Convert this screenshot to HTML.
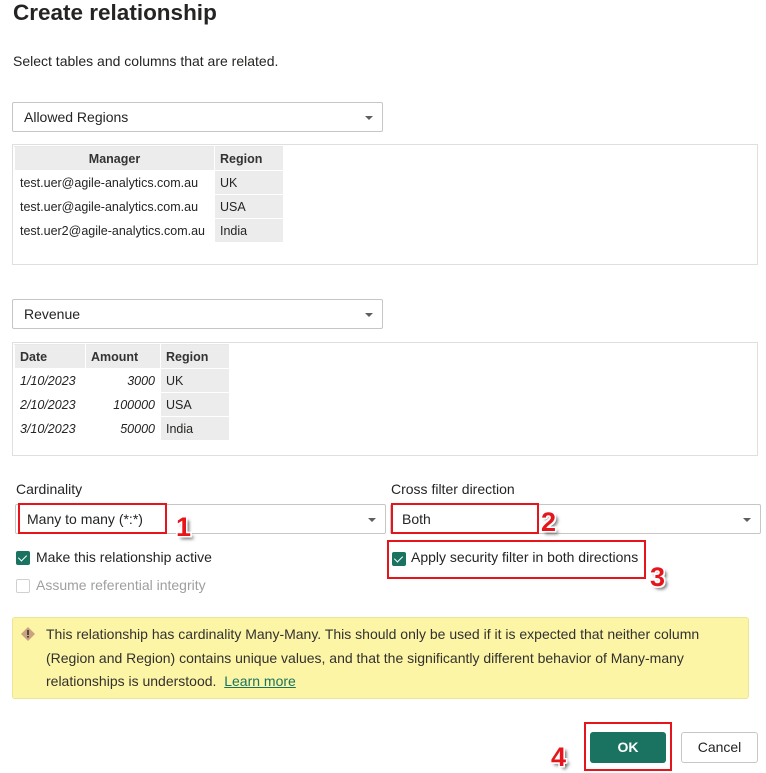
<!DOCTYPE html>
<html><head><meta charset="utf-8"><style>
*{box-sizing:border-box;margin:0;padding:0}
body{width:766px;height:773px;background:#fff;position:relative;overflow:hidden;font-family:"Liberation Sans",sans-serif;color:#252423;font-size:14px}
.a{position:absolute;white-space:nowrap}
.dd{position:absolute;border:1px solid #c8c6c4;border-radius:2px;background:#fff}
.dd span{position:absolute;left:11px;top:6px;font-size:14px;color:#252423}
.dd i{position:absolute;right:9px;top:13px;border-left:4px solid transparent;border-right:4px solid transparent;border-top:4px solid #605e5c}
.box{position:absolute;border:1px solid #e1dfdd}
table{border-collapse:collapse;font-size:12.5px;position:absolute;left:1px;top:1px}
td,th{height:24px;padding:0 5px;border:1px solid #fff;border-top:1px solid #e8e8e8}
th{background:#ececec;font-weight:bold;color:#333}
.g{background:#ececec}
.red{position:absolute;border:2px solid #e6141b}
.num{position:absolute;font-weight:bold;font-size:27px;color:#e6141b;text-shadow:-1.5px -1.5px 0 #fff,1.5px -1.5px 0 #fff,-1.5px 1.5px 0 #fff,1.5px 1.5px 0 #fff,0 1.5px 0 #fff,1.5px 0 0 #fff,3px 3px 3px #666}
.cb{position:absolute;width:14px;height:14px;border-radius:2px;background:#1a7360}
.cb:after{content:"";position:absolute;left:4px;top:2px;width:4px;height:7px;border:solid #fff;border-width:0 1.5px 1.5px 0;transform:rotate(45deg)}
</style></head><body>
<div class="a" style="left:13px;top:0px;font-size:22.5px;font-weight:bold;color:#252423">Create relationship</div>
<div class="a" style="left:13px;top:53px;font-size:14px">Select tables and columns that are related.</div>

<div class="dd" style="left:12px;top:102px;width:371px;height:30px"><span>Allowed Regions</span><i></i></div>
<div class="box" style="left:12px;top:144px;width:746px;height:121px">
<table><tr><th style="width:200px">Manager</th><th style="width:69px;text-align:left">Region</th></tr>
<tr><td>test.uer@agile-analytics.com.au</td><td class="g">UK</td></tr>
<tr><td>test.uer@agile-analytics.com.au</td><td class="g">USA</td></tr>
<tr><td>test.uer2@agile-analytics.com.au</td><td class="g">India</td></tr></table></div>

<div class="dd" style="left:12px;top:299px;width:371px;height:30px"><span>Revenue</span><i></i></div>
<div class="box" style="left:12px;top:342px;width:746px;height:114px">
<table><tr><th style="width:71px;text-align:left">Date</th><th style="width:75px;text-align:left">Amount</th><th style="width:69px;text-align:left">Region</th></tr>
<tr><td><i>1/10/2023</i></td><td style="text-align:right"><i>3000</i></td><td class="g">UK</td></tr>
<tr><td><i>2/10/2023</i></td><td style="text-align:right"><i>100000</i></td><td class="g">USA</td></tr>
<tr><td><i>3/10/2023</i></td><td style="text-align:right"><i>50000</i></td><td class="g">India</td></tr></table></div>

<div class="a" style="left:16px;top:481px">Cardinality</div>
<div class="dd" style="left:15px;top:504px;width:371px;height:30px"><span>Many to many (*:*)</span><i></i></div>
<div class="a" style="left:391px;top:481px">Cross filter direction</div>
<div class="dd" style="left:390px;top:504px;width:371px;height:30px"><span>Both</span><i></i></div>

<div class="red" style="left:18px;top:503px;width:149px;height:31px"></div>
<div class="num" style="left:176px;top:512px">1</div>
<div class="red" style="left:391px;top:503px;width:148px;height:31px"></div>
<div class="num" style="left:541px;top:507px">2</div>

<div class="cb" style="left:16px;top:551px"></div>
<div class="a" style="left:36px;top:549px">Make this relationship active</div>
<div class="a" style="left:16px;top:579px;width:14px;height:14px;border:1px solid #d2d0ce;border-radius:2px"></div>
<div class="a" style="left:36px;top:577px;color:#a19f9d">Assume referential integrity</div>

<div class="red" style="left:387px;top:540px;width:259px;height:39px"></div>
<div class="cb" style="left:392px;top:552px"></div>
<div class="a" style="left:411px;top:549px">Apply security filter in both directions</div>
<div class="num" style="left:650px;top:562px">3</div>

<div class="a" style="left:12px;top:617px;width:737px;height:82px;background:#fcf5a5;border:1px solid #ece496;border-radius:3px"></div>
<svg class="a" style="left:20px;top:626px" width="16" height="16" viewBox="0 0 16 16"><path d="M8 1 L15 8 L8 15 L1 8 Z" fill="#c9a27f"/><rect x="7.2" y="4" width="1.6" height="5" fill="#333"/><rect x="7.2" y="10" width="1.6" height="1.6" fill="#333"/></svg>
<div class="a" style="left:46px;top:626px;color:#323130">This relationship has cardinality Many-Many. This should only be used if it is expected that neither column</div>
<div class="a" style="left:46px;top:650px;color:#323130">(Region and Region) contains unique values, and that the significantly different behavior of Many-many</div>
<div class="a" style="left:46px;top:673px;color:#323130">relationships is understood.&nbsp; <span style="color:#1a7360;text-decoration:underline">Learn more</span></div>

<div class="red" style="left:584px;top:722px;width:88px;height:49px"></div>
<div class="a" style="left:590px;top:732px;width:76px;height:31px;background:#1a7360;border-radius:3px;color:#fff;font-weight:bold;text-align:center;line-height:31px">OK</div>
<div class="a" style="left:681px;top:732px;width:77px;height:31px;border:1px solid #c8c6c4;border-radius:3px;text-align:center;line-height:29px">Cancel</div>
<div class="num" style="left:551px;top:742px">4</div>
</body></html>
